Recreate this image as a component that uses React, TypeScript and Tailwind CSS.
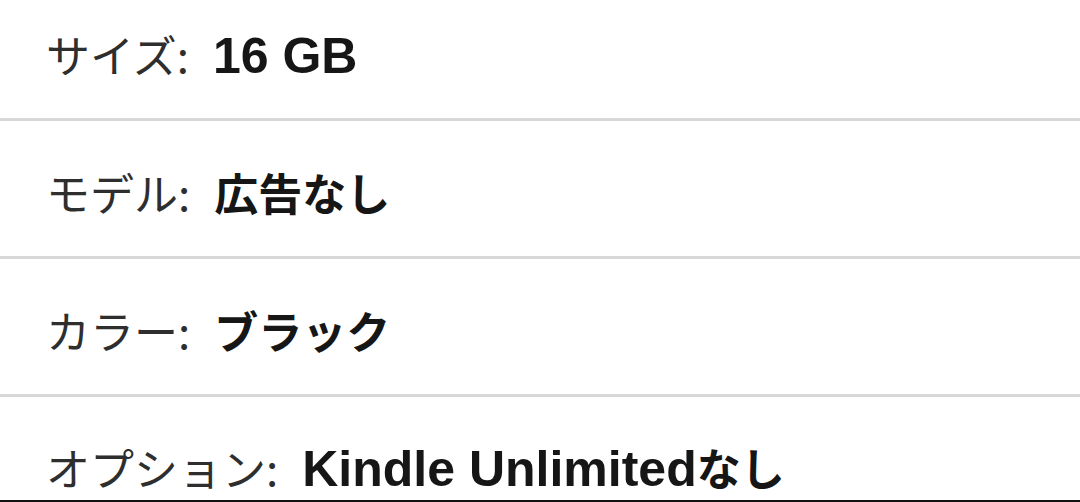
const specs = [
  { label: "サイズ", value: [{ text: "16 GB", latin: true }] },
  { label: "モデル", value: [{ text: "広告なし" }] },
  { label: "カラー", value: [{ text: "ブラック" }] },
  { label: "オプション", value: [{ text: "Kindle Unlimited", latin: true }, { text: "なし" }] },
];

type Part = { text: string; latin?: boolean };

function SpecRow({ label, value, index }: { label: string; value: Part[]; index: number }) {
  const last = index === specs.length - 1;
  const size = index === 0 ? "h-[121px] pt-[29px]" : last ? "h-[103px] pt-[45px]" : "h-[138px] pt-[46px]";

  return (
    <div className={`shrink-0 pl-[46px] ${size} ${last ? "" : "border-b-[3px] border-[#d8d8d8]"}`}>
      <p className="whitespace-nowrap text-[44px] leading-[50px]">
        <span className="font-normal text-[#2e2e2e]">{label}:</span>
        <span className="ml-[24px] font-bold text-[#161616]">
          {value.map((p) =>
            p.latin ? (
              <span
                key={p.text}
                className="text-[50px]"
                style={{ fontFamily: '"Liberation Sans", Arial, sans-serif' }}
              >
                {p.text}
              </span>
            ) : (
              <span key={p.text}>{p.text}</span>
            )
          )}
        </span>
      </p>
    </div>
  );
}

export default function App() {
  return (
    <div
      className="flex h-[502px] w-[1080px] flex-col overflow-hidden bg-white"
      style={{ fontFamily: '"Noto Sans CJK JP", sans-serif' }}
    >
      {specs.map((s, i) => (
        <SpecRow key={s.label} label={s.label} value={s.value} index={i} />
      ))}
      <div className="h-[2px] shrink-0 bg-[#111111]" />
    </div>
  );
}
